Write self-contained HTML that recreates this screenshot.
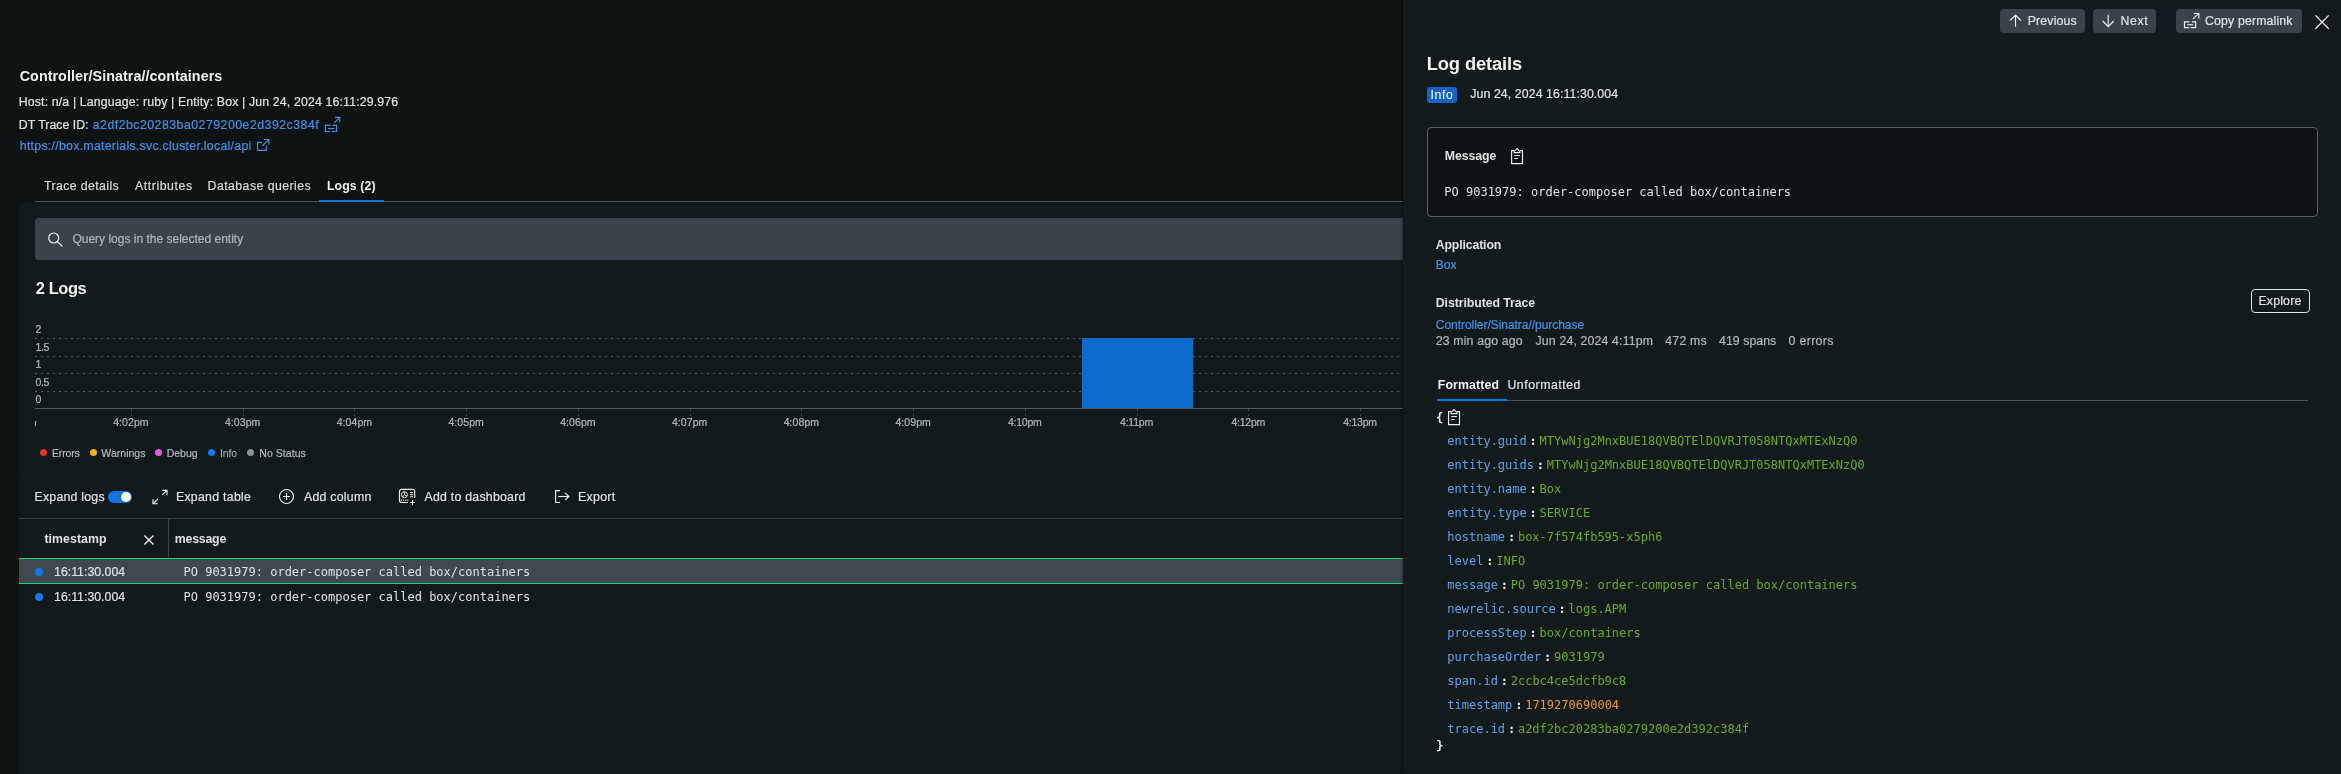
<!DOCTYPE html>
<html lang="en">
<head>
<meta charset="utf-8">
<title>Log details</title>
<style>
*{box-sizing:border-box;margin:0;padding:0}
html,body{width:2341px;height:774px;overflow:hidden;background:#0d1213}
body{position:relative;font-family:"Liberation Sans",Arial,sans-serif;font-size:12px;color:#e3e6e7}
.a{position:absolute;white-space:nowrap;line-height:1}
.s{-webkit-text-stroke:.2px}
.m{font-family:"DejaVu Sans Mono","Liberation Mono",monospace;font-size:12px}
.b{font-weight:bold}
svg{position:absolute;left:0;top:0;overflow:visible;pointer-events:none}
.ic{fill:none;stroke:#eef0f0;stroke-width:1.15;stroke-linecap:butt;stroke-linejoin:miter}
.il{fill:none;stroke:#3b96ee;stroke-width:1.1}
.grid{left:35px;width:1368px;height:1px;background:repeating-linear-gradient(90deg,#525a5e 0 2px,transparent 2px 6px)}
.dot{width:7px;height:7px;border-radius:50%;top:449px}
.btn{top:9px;height:24px;background:#39434a;border-radius:4px}
.k{color:#5aa2ea}.v{color:#6aab12}.n{color:#ee9a1a}.c{color:#eceeee;font-weight:bold;margin:0 2.8px}
.jr{left:1447.3px}
</style>
</head>
<body>
<div class="a" style="left:35px;top:201px;width:1380px;height:1px;background:#4b545a"></div>
<div class="a" style="left:319px;top:200px;width:65px;height:2px;background:#0e74df"></div>
<div class="a" style="left:19px;top:202px;width:1400px;height:59px;background:#12191b;border-radius:3px 0 0 2px"></div>
<div class="a" style="left:19px;top:261px;width:1400px;height:215px;background:#12191b;border-radius:2px 0 0 2px"></div>
<div class="a" style="left:19px;top:476px;width:1400px;height:310px;background:#12191b;border-radius:2px 0 0 0"></div>
<div class="a" style="left:35px;top:218px;width:1380px;height:42px;background:#39434a;border-radius:3.5px"></div>
<div class="a grid" style="top:338px"></div>
<div class="a grid" style="top:356px"></div>
<div class="a grid" style="top:373px"></div>
<div class="a grid" style="top:391px"></div>
<div class="a" style="left:35px;top:408px;width:1368px;height:1px;background:#525b61"></div>
<div class="a" style="left:131px;top:409px;width:1px;height:2px;background:#41494d"></div>
<div class="a" style="left:131px;top:414px;width:1px;height:2px;background:#41494d"></div>
<div class="a" style="left:243px;top:409px;width:1px;height:2px;background:#41494d"></div>
<div class="a" style="left:243px;top:414px;width:1px;height:2px;background:#41494d"></div>
<div class="a" style="left:354px;top:409px;width:1px;height:2px;background:#41494d"></div>
<div class="a" style="left:354px;top:414px;width:1px;height:2px;background:#41494d"></div>
<div class="a" style="left:466px;top:409px;width:1px;height:2px;background:#41494d"></div>
<div class="a" style="left:466px;top:414px;width:1px;height:2px;background:#41494d"></div>
<div class="a" style="left:578px;top:409px;width:1px;height:2px;background:#41494d"></div>
<div class="a" style="left:578px;top:414px;width:1px;height:2px;background:#41494d"></div>
<div class="a" style="left:690px;top:409px;width:1px;height:2px;background:#41494d"></div>
<div class="a" style="left:690px;top:414px;width:1px;height:2px;background:#41494d"></div>
<div class="a" style="left:801px;top:409px;width:1px;height:2px;background:#41494d"></div>
<div class="a" style="left:801px;top:414px;width:1px;height:2px;background:#41494d"></div>
<div class="a" style="left:913px;top:409px;width:1px;height:2px;background:#41494d"></div>
<div class="a" style="left:913px;top:414px;width:1px;height:2px;background:#41494d"></div>
<div class="a" style="left:1025px;top:409px;width:1px;height:2px;background:#41494d"></div>
<div class="a" style="left:1025px;top:414px;width:1px;height:2px;background:#41494d"></div>
<div class="a" style="left:1137px;top:409px;width:1px;height:2px;background:#41494d"></div>
<div class="a" style="left:1137px;top:414px;width:1px;height:2px;background:#41494d"></div>
<div class="a" style="left:1248px;top:409px;width:1px;height:2px;background:#41494d"></div>
<div class="a" style="left:1248px;top:414px;width:1px;height:2px;background:#41494d"></div>
<div class="a" style="left:1360px;top:409px;width:1px;height:2px;background:#41494d"></div>
<div class="a" style="left:1360px;top:414px;width:1px;height:2px;background:#41494d"></div>
<div class="a" style="left:35px;top:421px;width:1px;height:5px;background:#a9aeb0"></div>
<div class="a" style="left:1081.5px;top:338px;width:111px;height:70px;background:#0c6bcd"></div>
<div class="a dot" style="left:40px;background:#e1332c"></div>
<div class="a dot" style="left:90px;background:#f4b400"></div>
<div class="a dot" style="left:155px;background:#df5ee6"></div>
<div class="a dot" style="left:208px;background:#0f79e6"></div>
<div class="a dot" style="left:247px;background:#8b9194"></div>
<div class="a" style="left:108px;top:491px;width:24px;height:12px;border-radius:6px;background:#0e74df"></div>
<div class="a" style="left:121px;top:492px;width:10px;height:10px;border-radius:50%;background:#fff"></div>
<div class="a" style="left:19px;top:518px;width:1390px;height:1px;background:#3a4348"></div>
<div class="a" style="left:168px;top:519px;width:1px;height:39px;background:#3a4348"></div>
<div class="a" style="left:19px;top:558px;width:1390px;height:26px;background:#3e484f;border-top:1px solid #1fd67e;border-bottom:1px solid #1fd67e"></div>
<div class="a" style="left:35px;top:568px;width:8px;height:8px;border-radius:50%;background:#0f79e6"></div>
<div class="a" style="left:35px;top:593px;width:8px;height:8px;border-radius:50%;background:#0f79e6"></div>
<div class="a" style="left:1403px;top:0;width:938px;height:774px;background:#131a1c;box-shadow:-1px 0 2px rgba(0,0,0,.35)"></div>
<div class="a btn" style="left:2000px;width:85px"></div>
<div class="a btn" style="left:2093px;width:63px"></div>
<div class="a btn" style="left:2176px;width:126px"></div>
<div class="a" style="left:1427px;top:87px;width:30px;height:16px;background:#1463c4;border-radius:3px"></div>
<div class="a" style="left:1427px;top:127px;width:891px;height:90px;background:#0d1214;border:1px solid #566067;border-radius:4px"></div>
<div class="a" style="left:2251px;top:289px;width:59px;height:24px;border:1px solid #dfe2e3;border-radius:4px"></div>
<div class="a" style="left:1437px;top:400px;width:871px;height:1px;background:#4b545a"></div>
<div class="a" style="left:1437px;top:399px;width:70px;height:2px;background:#0e74df"></div>
<svg width="2341" height="774" viewBox="0 0 2341 774">
<g class="il"><path d="M330.4 125.4H325.4V131.5H330.2M331.9 131.5H336.6V125.4H332.6"/><path d="M328 128.5H334.2"/><path d="M334.2 122.8L339.6 117.5"/><path d="M335 117.4H339.8V122.2"/></g>
<g class="il"><path d="M262 142.4H257.5V150.4H266.3V145.6"/><path d="M262.3 146L268.7 139.6"/><path d="M263.8 139.5H268.9V144.8"/></g>
<g class="ic" style="stroke-width:1.2"><circle cx="53.7" cy="238" r="5"/><path d="M57.3 241.6L62 246" style="stroke-linecap:round"/></g>
<g class="ic"><path d="M162.2 494.8L166.8 490.5"/><path d="M162.5 490.3H167V494.7"/><path d="M158 499L153.2 503.5"/><path d="M153 499.2V503.7H157.7"/></g>
<g class="ic"><circle cx="286.5" cy="496.5" r="7"/><path d="M283 496.5H290M286.5 493V500"/></g>
<g class="ic" style="stroke-width:1.15"><path d="M407.9 502.5H401.5Q399.5 502.5 399.5 500.5V491.4Q399.5 489.4 401.5 489.4H412.7Q414.7 489.4 414.7 491.4V497.9"/><path d="M410.1 502.5H415M412.5 500.1V505"/><circle cx="404.4" cy="494.7" r="3" style="stroke-width:1"/><path d="M404.4 491.7V494.7L402.6 497M404.4 494.7L406.6 495.9" style="stroke-width:.9"/><path d="M410 492.6H413.2M410 494.7H413.2M410 496.8H413.2" style="stroke-width:1"/><path d="M401 500.2H408.6" style="stroke-dasharray:1 1.1;stroke-width:1.5"/></g>
<g class="ic" style="stroke-width:1.15"><path d="M560.1 490.6H555.6V502.5H560.1"/><path d="M558.1 496.5H568.8"/><path d="M565.1 492.9L568.9 496.5L565.1 500.1"/></g>
<g class="ic" style="stroke-width:1.35"><path d="M144.4 535.5L153.5 544.6M153.5 535.5L144.4 544.6"/></g>
</svg>
<svg width="2341" height="774" viewBox="0 0 2341 774">
<g class="ic" style="stroke-width:1.15"><path d="M2015.5 26.7V15"/><path d="M2010 20.6L2015.5 15L2021 20.6"/></g>
<g class="ic" style="stroke-width:1.15"><path d="M2108.2 14.7V26.6"/><path d="M2102.7 21L2108.2 26.6L2113.7 21"/></g>
<g class="ic"><path d="M2189.4 21.8H2184.5V27.6H2189.2M2190.8 27.6H2195.6V21.8H2191.8"/><path d="M2187.3 24.7H2193"/><path d="M2193 18.9L2198.6 13.6"/><path d="M2193.8 13.5H2198.8V18.6"/></g>
<g class="ic" style="stroke-width:1.3"><path d="M2315.4 15.4L2328.7 28.7M2328.7 15.4L2315.4 28.7"/></g>
<g transform="translate(0,0)" class="ic" style="stroke-width:1.15"><path d="M1514.2 150.6H1511.6V163.6H1522.5V150.6H1519.9"/><path d="M1514.2 150.2V152.6H1519.9V150.2"/><path d="M1515.2 150.6L1517.05 148.6L1518.9 150.6"/><path d="M1514.2 155.5H1519.9M1514.2 158.5H1517.9"/></g>
<g transform="translate(-63,261)" class="ic" style="stroke-width:1.15"><path d="M1514.2 150.6H1511.6V163.6H1522.5V150.6H1519.9"/><path d="M1514.2 150.2V152.6H1519.9V150.2"/><path d="M1515.2 150.6L1517.05 148.6L1518.9 150.6"/><path d="M1514.2 155.5H1519.9M1514.2 158.5H1517.9"/></g>
</svg>
<div class="a" style="left:0;top:0;width:2341px;height:774px;will-change:transform">
<div class="a b" style="left:19.75px;top:69.15px;font-size:14.3px;color:#f1f2f2;letter-spacing:0.050px">Controller/Sinatra//containers</div>
<div class="a s" style="left:18.75px;top:96.05px;font-size:12.3px;color:#dfe2e3;letter-spacing:0.155px">Host: n/a | Language: ruby | Entity: Box | Jun 24, 2024 16:11:29.976</div>
<div class="a s" style="left:18.75px;top:118.65px;font-size:12.3px;color:#dfe2e3;letter-spacing:0.027px">DT Trace ID:</div>
<div class="a s" style="left:92.75px;top:118.65px;font-size:12.3px;color:#3c92ea;letter-spacing:0.493px">a2df2bc20283ba0279200e2d392c384f</div>
<div class="a s" style="left:19.75px;top:139.85px;font-size:12.3px;color:#3c92ea;letter-spacing:0.289px">https://box.materials.svc.cluster.local/api</div>
<div class="a s" style="left:44.05px;top:180.15px;font-size:12.3px;color:#d9dcdd;letter-spacing:0.393px">Trace details</div>
<div class="a s" style="left:134.95px;top:180.15px;font-size:12.3px;color:#d9dcdd;letter-spacing:0.578px">Attributes</div>
<div class="a s" style="left:207.55px;top:180.15px;font-size:12.3px;color:#d9dcdd;letter-spacing:0.451px">Database queries</div>
<div class="a b" style="left:326.95px;top:180.15px;font-size:12.3px;color:#f1f2f2;letter-spacing:0.125px">Logs (2)</div>
<div class="a s" style="left:72.45px;top:233.10px;font-size:12px;color:#b1b6b8">Query logs in the selected entity</div>
<div class="a b" style="left:35.85px;top:279.80px;font-size:16.4px;color:#f1f2f2;letter-spacing:-0.400px">2 Logs</div>
<div class="a s" style="left:35.55px;top:324.05px;font-size:10.5px;color:#b4b9bb">2</div>
<div class="a s" style="left:35.55px;top:341.75px;font-size:10.5px;color:#b4b9bb;letter-spacing:-0.400px">1.5</div>
<div class="a s" style="left:35.55px;top:359.15px;font-size:10.5px;color:#b4b9bb">1</div>
<div class="a s" style="left:35.55px;top:376.75px;font-size:10.5px;color:#b4b9bb;letter-spacing:-0.400px">0.5</div>
<div class="a s" style="left:35.55px;top:393.85px;font-size:10.5px;color:#b4b9bb">0</div>
<div class="a s" style="left:113.15px;top:416.75px;font-size:10.5px;color:#b4b9bb;letter-spacing:0.085px">4:02pm</div>
<div class="a s" style="left:224.90px;top:416.75px;font-size:10.5px;color:#b4b9bb;letter-spacing:0.085px">4:03pm</div>
<div class="a s" style="left:336.65px;top:416.75px;font-size:10.5px;color:#b4b9bb;letter-spacing:0.085px">4:04pm</div>
<div class="a s" style="left:448.40px;top:416.75px;font-size:10.5px;color:#b4b9bb;letter-spacing:0.085px">4:05pm</div>
<div class="a s" style="left:560.15px;top:416.75px;font-size:10.5px;color:#b4b9bb;letter-spacing:0.085px">4:06pm</div>
<div class="a s" style="left:671.90px;top:416.75px;font-size:10.5px;color:#b4b9bb;letter-spacing:0.085px">4:07pm</div>
<div class="a s" style="left:783.65px;top:416.75px;font-size:10.5px;color:#b4b9bb;letter-spacing:0.085px">4:08pm</div>
<div class="a s" style="left:895.40px;top:416.75px;font-size:10.5px;color:#b4b9bb;letter-spacing:0.085px">4:09pm</div>
<div class="a s" style="left:1007.90px;top:416.75px;font-size:10.5px;color:#b4b9bb;letter-spacing:-0.215px">4:10pm</div>
<div class="a s" style="left:1120.10px;top:416.75px;font-size:10.5px;color:#b4b9bb;letter-spacing:-0.239px">4:11pm</div>
<div class="a s" style="left:1231.40px;top:416.75px;font-size:10.5px;color:#b4b9bb;letter-spacing:-0.215px">4:12pm</div>
<div class="a s" style="left:1343.15px;top:416.75px;font-size:10.5px;color:#b4b9bb;letter-spacing:-0.215px">4:13pm</div>
<div class="a s" style="left:51.95px;top:447.75px;font-size:10.5px;color:#b4b9bb;letter-spacing:-0.147px">Errors</div>
<div class="a s" style="left:101.35px;top:447.75px;font-size:10.5px;color:#b4b9bb;letter-spacing:0.027px">Warnings</div>
<div class="a s" style="left:166.75px;top:447.75px;font-size:10.5px;color:#b4b9bb;letter-spacing:-0.025px">Debug</div>
<div class="a" style="left:219.95px;top:447.75px;font-size:10.5px;color:#b4b9bb;letter-spacing:-0.125px">Info</div>
<div class="a s" style="left:259.25px;top:447.75px;font-size:10.5px;color:#b4b9bb;letter-spacing:0.055px">No Status</div>
<div class="a s" style="left:34.55px;top:491.05px;font-size:12.3px;color:#dfe2e3;letter-spacing:0.237px">Expand logs</div>
<div class="a s" style="left:175.95px;top:491.05px;font-size:12.3px;color:#dfe2e3;letter-spacing:0.286px">Expand table</div>
<div class="a s" style="left:303.95px;top:491.05px;font-size:12.3px;color:#dfe2e3;letter-spacing:0.267px">Add column</div>
<div class="a s" style="left:424.45px;top:491.05px;font-size:12.3px;color:#dfe2e3;letter-spacing:0.257px">Add to dashboard</div>
<div class="a s" style="left:577.95px;top:491.05px;font-size:12.3px;color:#dfe2e3;letter-spacing:0.335px">Export</div>
<div class="a b" style="left:44.45px;top:533.05px;font-size:12.3px;color:#dfe2e3;letter-spacing:0.076px">timestamp</div>
<div class="a b" style="left:174.75px;top:533.05px;font-size:12.3px;color:#dfe2e3;letter-spacing:-0.184px">message</div>
<div class="a s" style="left:54.05px;top:565.65px;font-size:12.3px;color:#dfe2e3;letter-spacing:0.014px">16:11:30.004</div>
<div class="a m" style="left:183.50px;top:565.80px;font-size:12px;color:#dfe2e3">PO 9031979: order-composer called box/containers</div>
<div class="a s" style="left:54.05px;top:590.65px;font-size:12.3px;color:#dfe2e3;letter-spacing:0.014px">16:11:30.004</div>
<div class="a m" style="left:183.50px;top:590.80px;font-size:12px;color:#dfe2e3">PO 9031979: order-composer called box/containers</div>
<div class="a s" style="left:2027.75px;top:14.85px;font-size:12.3px;color:#dfe2e3;letter-spacing:0.158px">Previous</div>
<div class="a s" style="left:2120.55px;top:14.85px;font-size:12.3px;color:#dfe2e3;letter-spacing:0.611px">Next</div>
<div class="a s" style="left:2205.05px;top:14.85px;font-size:12.3px;color:#dfe2e3;letter-spacing:0.148px">Copy permalink</div>
<div class="a b" style="left:1426.75px;top:54.65px;font-size:18.3px;color:#f1f2f2;letter-spacing:-0.113px">Log details</div>
<div class="a" style="left:1430.55px;top:88.55px;font-size:12.3px;color:#ffffff;letter-spacing:0.609px">Info</div>
<div class="a s" style="left:1470.25px;top:88.15px;font-size:12.3px;color:#dfe2e3;letter-spacing:0.101px">Jun 24, 2024 16:11:30.004</div>
<div class="a b" style="left:1444.75px;top:149.85px;font-size:12.3px;color:#dfe2e3;letter-spacing:-0.068px">Message</div>
<div class="a m" style="left:1444.30px;top:186.20px;font-size:12px;color:#dfe2e3">PO 9031979: order-composer called box/containers</div>
<div class="a b" style="left:1435.75px;top:239.05px;font-size:12.3px;color:#dfe2e3;letter-spacing:-0.144px">Application</div>
<div class="a s" style="left:1435.75px;top:259.00px;font-size:12px;color:#3c92ea">Box</div>
<div class="a b" style="left:1435.75px;top:296.85px;font-size:12.3px;color:#dfe2e3;letter-spacing:-0.070px">Distributed Trace</div>
<div class="a s" style="left:2258.45px;top:294.85px;font-size:12.3px;color:#dfe2e3;letter-spacing:0.191px">Explore</div>
<div class="a s" style="left:1435.75px;top:319.20px;font-size:12px;color:#3c92ea;letter-spacing:-0.038px">Controller/Sinatra//purchase</div>
<div class="a s" style="left:1435.75px;top:334.85px;font-size:12.3px;color:#b4b9bb;letter-spacing:0.159px">23 min ago ago</div>
<div class="a s" style="left:1535.55px;top:334.85px;font-size:12.3px;color:#b4b9bb;letter-spacing:0.156px">Jun 24, 2024 4:11pm</div>
<div class="a s" style="left:1665.25px;top:334.85px;font-size:12.3px;color:#b4b9bb;letter-spacing:0.225px">472 ms</div>
<div class="a s" style="left:1719.05px;top:334.85px;font-size:12.3px;color:#b4b9bb;letter-spacing:0.050px">419 spans</div>
<div class="a s" style="left:1788.55px;top:334.85px;font-size:12.3px;color:#b4b9bb;letter-spacing:0.355px">0 errors</div>
<div class="a b" style="left:1437.75px;top:379.05px;font-size:12.3px;color:#f1f2f2;letter-spacing:0.149px">Formatted</div>
<div class="a s" style="left:1507.45px;top:379.05px;font-size:12.3px;color:#dfe2e3;letter-spacing:0.528px">Unformatted</div>
<div class="a m b" style="left:1436px;top:412.00px;color:#eceeee">{</div>
<div class="a m jr" style="top:435.00px"><span class="k">entity.guid</span><span class="c">:</span><span class="v">MTYwNjg2MnxBUE18QVBQTElDQVRJT058NTQxMTExNzQ0</span></div>
<div class="a m jr" style="top:459.00px"><span class="k">entity.guids</span><span class="c">:</span><span class="v">MTYwNjg2MnxBUE18QVBQTElDQVRJT058NTQxMTExNzQ0</span></div>
<div class="a m jr" style="top:483.00px"><span class="k">entity.name</span><span class="c">:</span><span class="v">Box</span></div>
<div class="a m jr" style="top:507.00px"><span class="k">entity.type</span><span class="c">:</span><span class="v">SERVICE</span></div>
<div class="a m jr" style="top:531.00px"><span class="k">hostname</span><span class="c">:</span><span class="v">box-7f574fb595-x5ph6</span></div>
<div class="a m jr" style="top:555.00px"><span class="k">level</span><span class="c">:</span><span class="v">INFO</span></div>
<div class="a m jr" style="top:579.00px"><span class="k">message</span><span class="c">:</span><span class="v">PO 9031979: order-composer called box/containers</span></div>
<div class="a m jr" style="top:603.00px"><span class="k">newrelic.source</span><span class="c">:</span><span class="v">logs.APM</span></div>
<div class="a m jr" style="top:627.00px"><span class="k">processStep</span><span class="c">:</span><span class="v">box/containers</span></div>
<div class="a m jr" style="top:651.00px"><span class="k">purchaseOrder</span><span class="c">:</span><span class="v">9031979</span></div>
<div class="a m jr" style="top:675.00px"><span class="k">span.id</span><span class="c">:</span><span class="v">2ccbc4ce5dcfb9c8</span></div>
<div class="a m jr" style="top:699.00px"><span class="k">timestamp</span><span class="c">:</span><span class="n">1719270690004</span></div>
<div class="a m jr" style="top:723.00px"><span class="k">trace.id</span><span class="c">:</span><span class="v">a2df2bc20283ba0279200e2d392c384f</span></div>
<div class="a m b" style="left:1436.2px;top:739.70px;color:#eceeee">}</div>
</div>
</body>
</html>
